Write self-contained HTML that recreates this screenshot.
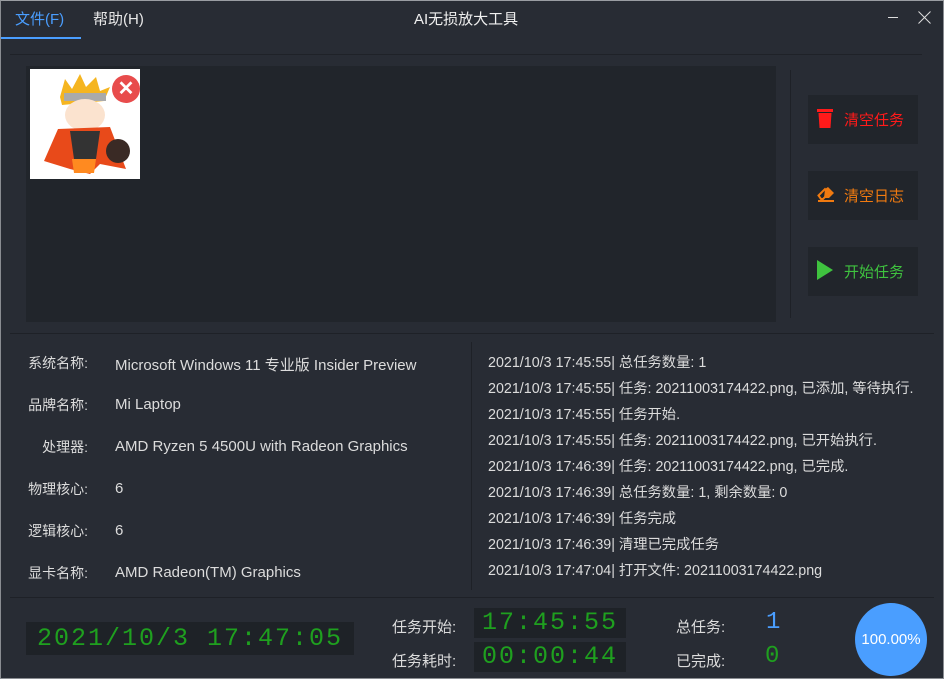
<!DOCTYPE html>
<html><head><meta charset="utf-8"><style>
*{margin:0;padding:0;box-sizing:border-box}
body{width:944px;height:679px;background:#282c34;font-family:"Liberation Sans","Noto Sans CJK SC",sans-serif;color:#dcdcdc;position:relative;overflow:hidden;font-size:14px}
.a{position:absolute;white-space:nowrap}
.frame{position:absolute;left:0;top:0;width:944px;height:679px;border:1px solid #8a8d92;border-top-color:#9a9da2}
.hl{position:absolute;height:1px;background:#1e2127}
.vl{position:absolute;width:1px;background:#1e2127}
.btn{position:absolute;left:808px;width:110px;height:49px;background:#21252b;font-size:15px}
.btn span{position:absolute;left:36px;top:14px}
.lab{position:absolute;width:88px;text-align:right;font-size:14px}
.val{position:absolute;left:115px;font-size:15px}
.log{position:absolute;left:488px;font-size:14.3px;white-space:nowrap}
.lcd{position:absolute;background:#1e2227;color:#1fa01f;font-family:"Liberation Mono",monospace;text-align:center;font-weight:normal}
</style></head><body>
<div class="frame"></div>
<div class="a" style="left:15px;top:8px;font-size:15px;color:#4a9eff">文件(F)</div>
<div class="a" style="left:1px;top:37px;width:80px;height:2px;background:#4a9eff"></div>
<div class="a" style="left:93px;top:8px;font-size:15px;color:#e8e8e8">帮助(H)</div>
<div class="a" style="left:414px;top:8px;font-size:15px;color:#f0f0f0">AI无损放大工具</div>
<div class="a" style="left:888px;top:17px;width:10px;height:1px;background:#ddd"></div>
<svg class="a" style="left:918px;top:11px" width="13" height="13" viewBox="0 0 13 13"><path d="M0.5 0.5 L12.5 12.5 M12.5 0.5 L0.5 12.5" stroke="#ddd" stroke-width="1"/></svg>
<div class="hl" style="left:10px;top:54px;width:912px;background:#1f2228"></div>
<div class="a" style="left:26px;top:66px;width:750px;height:256px;background:#21252b"></div>
<div class="a" style="left:30px;top:69px;width:110px;height:110px;background:#fff;overflow:hidden">
<svg width="110" height="110" viewBox="0 0 110 110">
<path d="M30 28 L35 10 L42 20 L50 5 L56 18 L66 8 L70 22 L80 18 L74 32 L32 36Z" fill="#f5b520"/>
<rect x="34" y="24" width="42" height="8" fill="#aaa"/>
<ellipse cx="55" cy="46" rx="20" ry="16" fill="#fbe3cf"/>
<path d="M28 60 L80 58 L96 100 L70 95 L60 105 L40 100 L14 92Z" fill="#e84a1a"/>
<path d="M40 62 L70 62 L66 90 L44 90Z" fill="#333"/>
<path d="M42 90 L66 90 L64 104 L44 104Z" fill="#ff8a20"/>
<circle cx="88" cy="82" r="12" fill="#3a2a25"/>
</svg>
</div>
<div class="a" style="left:112px;top:75px;width:28px;height:28px;border-radius:50%;background:#e84c4c;color:#fff;font-size:20px;font-weight:bold;text-align:center;line-height:28px">✕</div>
<div class="vl" style="left:790px;top:70px;height:248px"></div>
<div class="btn" style="top:95px;color:#ff1a1a">
<svg class="a" style="left:9px;top:14px" width="16" height="20" viewBox="0 0 16 20"><rect x="0" y="0" width="16" height="3" fill="#ff1a1a"/><path d="M1.5 4 H14.5 L13.5 19 H2.5Z" fill="#ff1a1a"/></svg>
<span>清空任务</span></div>
<div class="btn" style="top:171px;color:#f07a10">
<svg class="a" style="left:9px;top:16px" width="18" height="16" viewBox="0 0 18 16"><path d="M1.5 8.5 L8 2 L12 6 L6 12 H4Z" fill="none" stroke="#f07a10" stroke-width="2"/><path d="M8 2 L11 0 L17 6 L12 11 H7Z" fill="#f07a10"/><rect x="1" y="13" width="16" height="2" fill="#f07a10"/></svg>
<span>清空日志</span></div>
<div class="btn" style="top:247px;color:#3fc23f">
<svg class="a" style="left:8px;top:13px" width="18" height="20" viewBox="0 0 18 20"><path d="M1 0 L17 10 L1 20Z" fill="#3fc23f"/></svg>
<span>开始任务</span></div>
<div class="hl" style="left:10px;top:333px;width:924px"></div>
<div class="lab" style="top:353px">系统名称:</div><div class="val" style="top:354px">Microsoft Windows 11 专业版 Insider Preview</div>
<div class="lab" style="top:395px">品牌名称:</div><div class="val" style="top:396px">Mi Laptop</div>
<div class="lab" style="top:437px">处理器:</div><div class="val" style="top:438px">AMD Ryzen 5 4500U with Radeon Graphics</div>
<div class="lab" style="top:479px">物理核心:</div><div class="val" style="top:480px">6</div>
<div class="lab" style="top:521px">逻辑核心:</div><div class="val" style="top:522px">6</div>
<div class="lab" style="top:563px">显卡名称:</div><div class="val" style="top:564px">AMD Radeon(TM) Graphics</div>
<div class="vl" style="left:471px;top:342px;height:248px"></div>
<div class="log" style="top:351px">2021/10/3 17:45:55| 总任务数量: 1</div>
<div class="log" style="top:377px">2021/10/3 17:45:55| 任务: 20211003174422.png, 已添加, 等待执行.</div>
<div class="log" style="top:403px">2021/10/3 17:45:55| 任务开始.</div>
<div class="log" style="top:429px">2021/10/3 17:45:55| 任务: 20211003174422.png, 已开始执行.</div>
<div class="log" style="top:455px">2021/10/3 17:46:39| 任务: 20211003174422.png, 已完成.</div>
<div class="log" style="top:481px">2021/10/3 17:46:39| 总任务数量: 1, 剩余数量: 0</div>
<div class="log" style="top:507px">2021/10/3 17:46:39| 任务完成</div>
<div class="log" style="top:533px">2021/10/3 17:46:39| 清理已完成任务</div>
<div class="log" style="top:559px">2021/10/3 17:47:04| 打开文件: 20211003174422.png</div>
<div class="hl" style="left:10px;top:597px;width:924px"></div>
<div class="lcd" style="left:26px;top:622px;width:328px;height:33px;font-size:25px;line-height:33px;letter-spacing:2px">2021/10/3 17:47:05</div>
<div class="a" style="left:392px;top:616px;font-size:15px">任务开始:</div>
<div class="a" style="left:392px;top:650px;font-size:15px">任务耗时:</div>
<div class="lcd" style="left:474px;top:608px;width:152px;height:30px;font-size:25px;line-height:30px;letter-spacing:2px">17:45:55</div>
<div class="lcd" style="left:474px;top:642px;width:152px;height:30px;font-size:25px;line-height:30px;letter-spacing:2px">00:00:44</div>
<div class="a" style="left:676px;top:616px;font-size:15px">总任务:</div>
<div class="a" style="left:676px;top:650px;font-size:15px">已完成:</div>
<div class="a" style="left:766px;top:609px;font-size:24px;color:#4a9eff;font-family:'Liberation Mono',monospace">1</div>
<div class="a" style="left:765px;top:643px;font-size:24px;color:#1fa01f;font-family:'Liberation Mono',monospace">0</div>
<div class="a" style="left:855px;top:603px;width:72px;height:73px;border-radius:50%;background:#4a9eff;color:#fff;font-size:15px;text-align:center;line-height:73px">100.00%</div>
</body></html>
